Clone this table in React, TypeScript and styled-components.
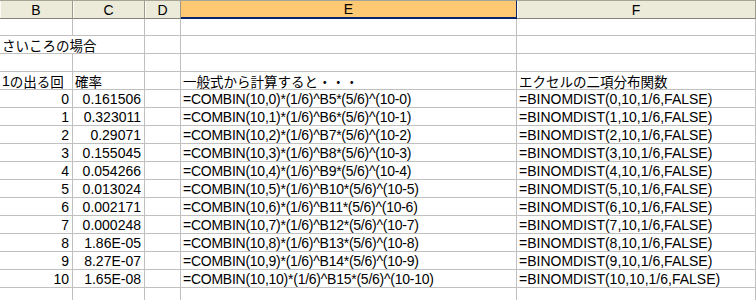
import React from "react";
import styled, { createGlobalStyle } from "styled-components";

const Global = createGlobalStyle`
  html, body { margin: 0; padding: 0; background: #ffffff; overflow: hidden; }
  #root { width: 756px; height: 300px; overflow: hidden; }
`;

const Sheet = styled.div`
  display: grid;
  grid-template-columns: 73px 72px 36px 336px 1fr;
  grid-auto-rows: 18px;
  width: 756px;
  font-family: "Liberation Sans", "Noto Sans CJK JP", sans-serif;
  font-size: 14px;
  color: #000;
`;

const HeaderRow = styled.div`
  display: contents;
`;

const HeaderCell = styled.div<{ $active?: boolean }>`
  box-sizing: border-box;
  height: 19px;
  margin-bottom: -1px;
  border-top: 1px solid #a5a497;
  border-bottom: ${(p) => (p.$active ? "2px solid #0a246a" : "1px solid #85847a")};
  border-right: 1px solid ${(p) => (p.$active ? "#0a246a" : "#9a998c")};
  background: ${(p) => (p.$active ? "#ffc873" : "#ecead9")};
  box-shadow: ${(p) => (p.$active ? "none" : "inset 1px 0 0 #fbfbf6")};
  display: flex;
  align-items: center;
  justify-content: center;
  line-height: 16px;
  position: relative;
  z-index: 1;
`;

const Cell = styled.div<{ $align?: "left" | "right"; $span?: number; $tight?: boolean }>`
  box-sizing: border-box;
  border-right: 1px solid #c0c0c0;
  border-bottom: 1px solid #c0c0c0;
  grid-column: ${(p) => (p.$span ? `span ${p.$span}` : "auto")};
  display: flex;
  align-items: center;
  justify-content: ${(p) => (p.$align === "right" ? "flex-end" : "flex-start")};
  padding: ${(p) => (p.$align === "right" ? "1px 3px 0 0" : "1px 0 0 2px")};
  white-space: nowrap;
  line-height: 16px;
  letter-spacing: ${(p) => (p.$tight ? "-0.25px" : "normal")};
`;

const Jp = styled.span`
  font-family: "Noto Sans CJK JP", sans-serif;
  font-size: 13.5px;
  line-height: 16px;
`;

const values = [
  "0.161506",
  "0.323011",
  "0.29071",
  "0.155045",
  "0.054266",
  "0.013024",
  "0.002171",
  "0.000248",
  "1.86E-05",
  "8.27E-07",
  "1.65E-08",
];

const Blank = () => (
  <>
    <Cell />
    <Cell />
    <Cell />
    <Cell />
    <Cell />
  </>
);

export default function App() {
  return (
    <>
      <Global />
      <Sheet>
        <HeaderRow>
          <HeaderCell>B</HeaderCell>
          <HeaderCell>C</HeaderCell>
          <HeaderCell>D</HeaderCell>
          <HeaderCell $active>E</HeaderCell>
          <HeaderCell>F</HeaderCell>
        </HeaderRow>
        <Blank />
        <Cell $span={2}>
          <Jp>さいころの場合</Jp>
        </Cell>
        <Cell />
        <Cell />
        <Cell />
        <Blank />
        <Cell>
          1<Jp>の出る回</Jp>
        </Cell>
        <Cell>
          <Jp>確率</Jp>
        </Cell>
        <Cell />
        <Cell>
          <Jp>一般式から計算すると・・・</Jp>
        </Cell>
        <Cell>
          <Jp>エクセルの二項分布関数</Jp>
        </Cell>
        {values.map((v, n) => (
          <React.Fragment key={n}>
            <Cell $align="right">{n}</Cell>
            <Cell $align="right">{v}</Cell>
            <Cell />
            <Cell $tight>{`=COMBIN(10,${n})*(1/6)^B${5 + n}*(5/6)^(10-${n})`}</Cell>
            <Cell>{`=BINOMDIST(${n},10,1/6,FALSE)`}</Cell>
          </React.Fragment>
        ))}
        <Blank />
      </Sheet>
    </>
  );
}
